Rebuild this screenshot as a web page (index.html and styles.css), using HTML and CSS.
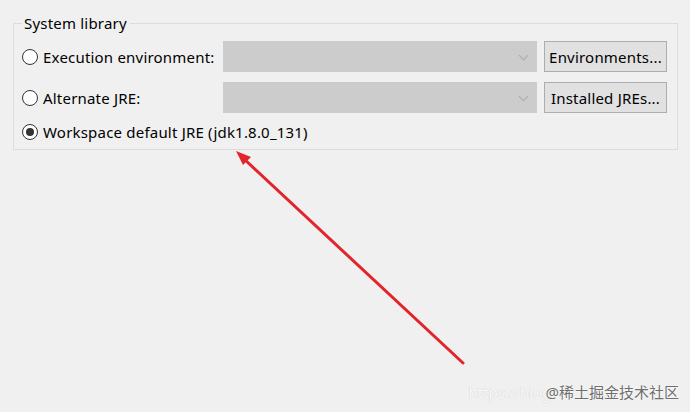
FILE: index.html
```html
<!DOCTYPE html>
<html lang="en">
<head>
    <meta charset="UTF-8">
    <title>Edit Library - JRE System Library</title>
    <link rel="stylesheet" href="styles.css">
</head>
<body>

<div class="page">
    <fieldset class="group">
        <legend>System library</legend>
        <div class="rows">
            <label class="choice"><span class="radio"></span>Execution environment:</label>
            <div class="combo"><span class="chevron"></span></div>
            <button class="btn">Environments...</button>

            <label class="choice"><span class="radio"></span>Alternate JRE:</label>
            <div class="combo"><span class="chevron"></span></div>
            <button class="btn">Installed JREs...</button>

            <label class="choice wide"><span class="radio checked"></span>Workspace default JRE (jdk1.8.0_131)</label>
        </div>
    </fieldset>

    <!-- red annotation arrow pointing at the default JRE -->
    <svg class="arrow" width="690" height="412" viewBox="0 0 690 412">
        <line x1="463" y1="363" x2="243" y2="158" stroke="#e3242b" stroke-width="3" stroke-linecap="round"/>
        <polygon points="236,151 251,157 243,165" fill="#e3242b"/>
    </svg>

    <div class="watermark"><span class="url">https://blog</span>@稀土掘金技术社区</div>
</div>

</body>
</html>
```

FILE: styles.css
```css
body {
    margin: 0;
    background: #f0f0f0;
    color: #000;
    font-family: "Noto Sans", "Noto Sans CJK SC", sans-serif;
    font-size: 15px;
    letter-spacing: 0.2px;
}
.page {
    position: relative;
    width: 690px;
    height: 412px;
    overflow: hidden;
}
.group {
    margin: 13px 0 0 13px;
    width: 665px;
    box-sizing: border-box;
    border: 1px solid #dcdcdc;
    padding: 0 10px 7px 8px;
}
.group legend {
    margin-left: 0;
    padding: 0 3px 0 2px;
    line-height: 20px;
}
.rows {
    display: grid;
    grid-template-columns: 194px 314px 123px;
    column-gap: 7px;
    row-gap: 10px;
    padding-top: 8px;
    align-items: center;
}
.choice {
    display: flex;
    align-items: center;
    gap: 5px;
    white-space: nowrap;
}
.choice.wide {
    grid-column: 1 / 4;
    height: 20px;
    margin-top: -1px;
}
.radio {
    width: 14px;
    height: 14px;
    border: 1px solid #333;
    border-radius: 50%;
    background: #fff;
    position: relative;
    flex: none;
}
.radio.checked::after {
    content: "";
    position: absolute;
    left: 3px;
    top: 3px;
    width: 8px;
    height: 8px;
    border-radius: 50%;
    background: #333;
}
.combo {
    height: 31px;
    background: #cccccc;
    position: relative;
}
.chevron {
    position: absolute;
    right: 10px;
    top: 11px;
    width: 6px;
    height: 6px;
    border-right: 1px solid #aaa;
    border-bottom: 1px solid #aaa;
    transform: rotate(45deg);
}
.btn {
    height: 31px;
    background: #e1e1e1;
    border: 1px solid #adadad;
    font: inherit;
    letter-spacing: 0.2px;
    color: #000;
    padding: 0;
}
.arrow {
    position: absolute;
    left: 0;
    top: 0;
}
.watermark {
    position: absolute;
    right: 11px;
    top: 381px;
    font-size: 15px;
    letter-spacing: 0;
    color: #6e6e6e;
    text-shadow: 0 0 2px #fff, 0 0 1px #fff;
    white-space: nowrap;
}
.url {
    color: #fbfbfb;
    text-shadow: 0 0 1px #bbb;
    margin-right: -6px;
}
```
